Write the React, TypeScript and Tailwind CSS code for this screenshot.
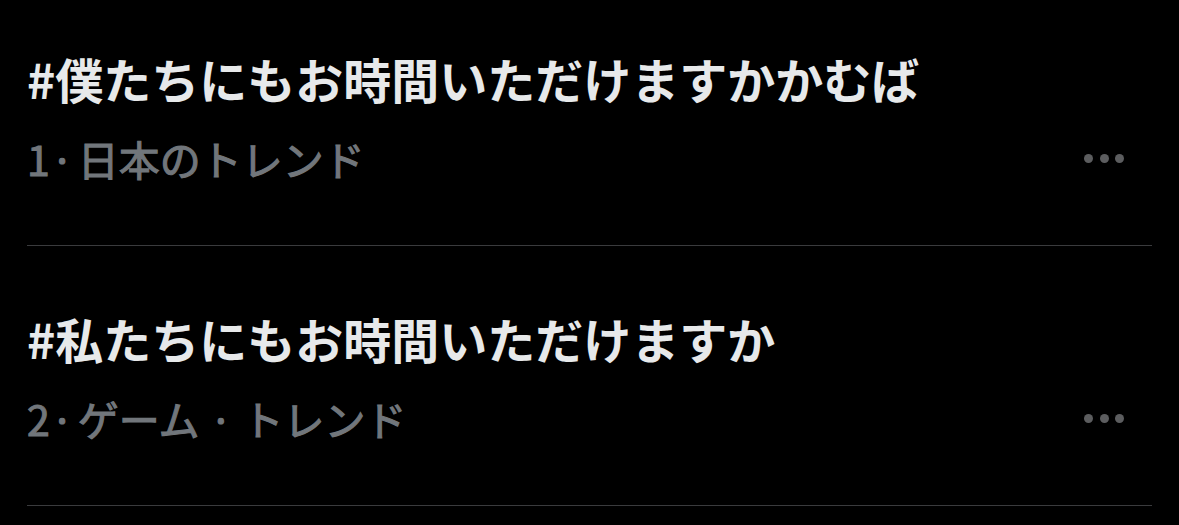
const trends = [
  { tag: "#僕たちにもお時間いただけますかかむば", rank: 1, meta: ["日本のトレンド"] },
  { tag: "#私たちにもお時間いただけますか", rank: 2, meta: ["ゲーム", "トレンド"] },
];

function MoreDots() {
  return (
    <div className="flex items-center gap-[6.5px] pr-[28px]">
      <span className="block w-[9px] h-[9px] rounded-full bg-[#5c5d5f]" />
      <span className="block w-[9px] h-[9px] rounded-full bg-[#5c5d5f]" />
      <span className="block w-[9px] h-[9px] rounded-full bg-[#5c5d5f]" />
    </div>
  );
}

export default function App() {
  return (
    <div
      className="w-[1179px] h-[525px] overflow-hidden bg-black pl-[27px] pr-[27px]"
      style={{ fontFamily: '"Noto Sans CJK JP", "Noto Sans", sans-serif' }}
    >
      {trends.map((t, i) => (
        <div key={t.rank} className={i === 0 ? "pt-[48px]" : "pt-[62px]"}>
          <div className="text-[48px] leading-[60px] font-bold text-[#e7e9ea] whitespace-nowrap">{t.tag}</div>
          <div className="mt-[25px] h-[50px] flex items-center justify-between">
            <div className="text-[41px] leading-[50px] font-normal text-[#71767b] [-webkit-text-stroke:1.1px_#71767b] whitespace-nowrap">
              {t.rank}
              {t.meta.map((m, j) => (
                <span key={m}>
                  <span className={j === 0 ? "ml-[1px] mr-[4px]" : "mx-[10px]"}>·</span>
                  {m}
                </span>
              ))}
            </div>
            <MoreDots />
          </div>
          <div className="mt-[62px] h-px bg-[#3a3b3d]" />
        </div>
      ))}
    </div>
  );
}
